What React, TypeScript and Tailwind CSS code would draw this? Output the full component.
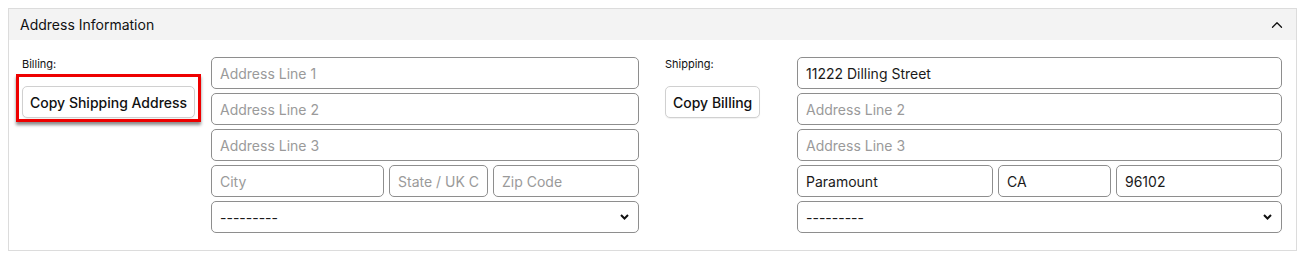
import { ChevronUp } from "lucide-react";

const inputCls =
  "h-[32px] min-w-0 rounded-[5px] border border-[#8e8e8e] bg-white px-[8px] text-[14px] text-[#1a1a1a] placeholder:text-[#9a9a9a] outline-none";

function Field({ placeholder, value, className = "w-full" }: { placeholder: string; value?: string; className?: string }) {
  return (
    <input
      className={`${inputCls} ${className}`}
      placeholder={placeholder}
      defaultValue={value}
      size={1}
    />
  );
}

function CountrySelect() {
  return (
    <div className="relative h-[32px] w-full">
      <select className="h-full w-full appearance-none rounded-[5px] border border-[#8e8e8e] bg-white px-[8px] text-[14px] text-[#1a1a1a] outline-none">
        <option>---------</option>
      </select>
      <svg
        className="pointer-events-none absolute right-[10px] top-[13px]"
        width="9"
        height="6"
        viewBox="0 0 9 6"
        fill="none"
      >
        <path d="M1 1l3.5 3.5L8 1" stroke="#111" strokeWidth="2" />
      </svg>
    </div>
  );
}

// 住所入力ブロック（Address Line 1〜3, City/State/Zip, Country）
function AddressFields({
  values,
  widths,
}: {
  values: { line1?: string; city?: string; state?: string; zip?: string };
  widths: [string, string];
}) {
  return (
    <div className="flex flex-col gap-[4px]">
      <Field placeholder="Address Line 1" value={values.line1} />
      <Field placeholder="Address Line 2" />
      <Field placeholder="Address Line 3" />
      <div className="flex gap-[5px]">
        <Field placeholder="City" value={values.city} className={`${widths[0]} flex-none`} />
        <Field placeholder="State / UK County" value={values.state} className={`${widths[1]} flex-none`} />
        <Field placeholder="Zip Code" value={values.zip} className="flex-1" />
      </div>
      <CountrySelect />
    </div>
  );
}

const btnCls =
  "h-[32px] rounded-[5px] border border-[#d0d0d0] bg-white px-[7px] text-[14px] font-medium text-[#111] shadow-[0_1px_1px_rgba(0,0,0,0.06)]";

export default function App() {
  return (
    <div className="min-h-[260px] bg-white pl-[8px] pt-[8px]" style={{ fontFamily: "Inter, 'Liberation Sans', sans-serif" }}>
      <div className="h-[243px] w-[1289px] border border-[#dcdcdc]">
        <div className="flex h-[31px] items-center justify-between bg-[#f3f3f3] pl-[11px] pr-[10px]">
          <span className="text-[14px] text-[#111]">Address Information</span>
          <ChevronUp size={18} strokeWidth={1.75} className="text-[#111]" />
        </div>

        <div className="flex pl-[13px] pt-[17px]">
          {/* Billing */}
          <div className="w-[189px]">
            <div className="text-[11px] leading-[14px] text-[#111]">Billing:</div>
            <div className="relative mt-[15px]">
              <button className={btnCls}>Copy Shipping Address</button>
              <div className="pointer-events-none absolute left-[-6px] top-[-12px] h-[48px] w-[185px] border-[3px] border-[#ee0000] shadow-[0_3px_3px_rgba(0,0,0,0.45)]" />
            </div>
          </div>
          <div className="w-[428px]">
            <AddressFields values={{}} widths={["w-[173px]", "w-[99px]"]} />
          </div>

          {/* Shipping */}
          <div className="ml-[26px] w-[132px]">
            <div className="text-[11px] leading-[14px] text-[#111]">Shipping:</div>
            <div className="mt-[15px]">
              <button className={btnCls}>Copy Billing</button>
            </div>
          </div>
          <div className="w-[485px]">
            <AddressFields
              values={{ line1: "11222 Dilling Street", city: "Paramount", state: "CA", zip: "96102" }}
              widths={["w-[196px]", "w-[113px]"]}
            />
          </div>
        </div>
      </div>
    </div>
  );
}
